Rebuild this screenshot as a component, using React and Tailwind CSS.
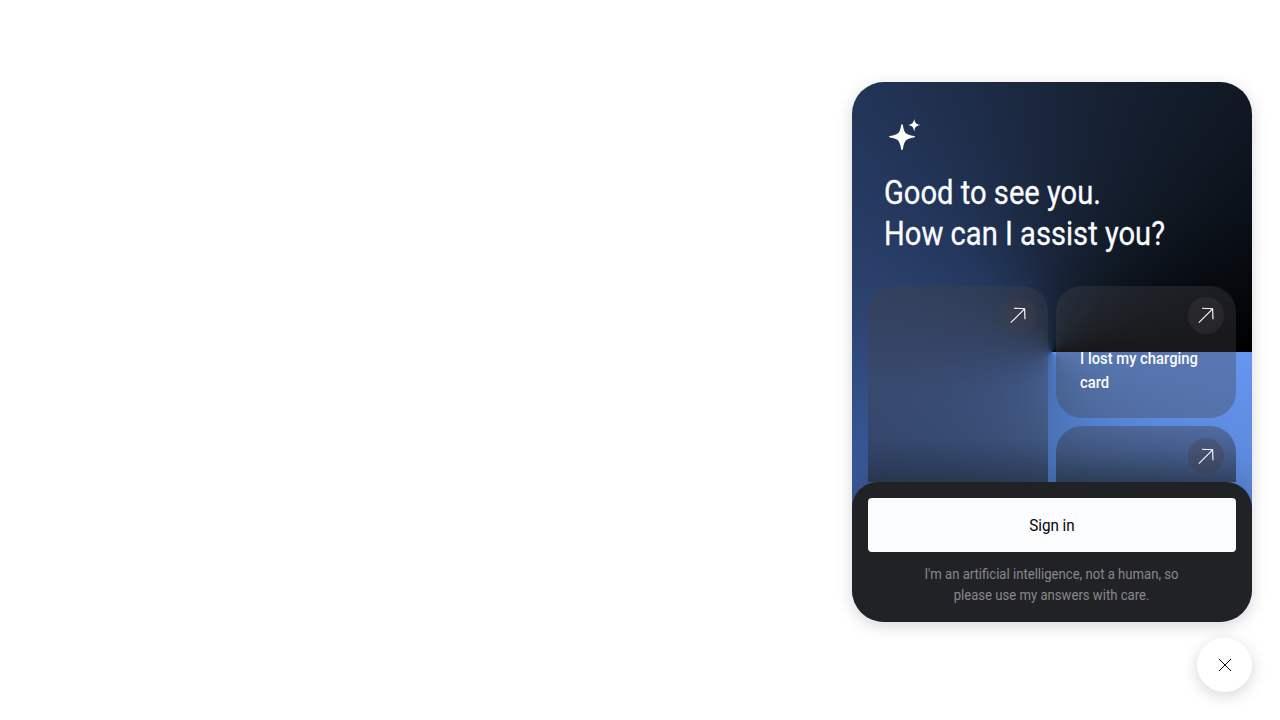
import React from "react";

const Arrow = () => (
  <span className="flex h-[36.5px] w-[36.5px] items-center justify-center rounded-full bg-[rgba(66,62,68,0.35)]">
    <svg width="18" height="18" viewBox="0 0 18 18" fill="none" stroke="#fbfcff" strokeWidth="1.15">
      <path d="M1.8 16.7L15.6 2.9M5 2.2L15.6 2.7L16 13.3" />
    </svg>
  </span>
);

const Card = ({ className = "", children }) => (
  <div
    className={`flex flex-col rounded-[26px] bg-[rgba(66,66,72,0.365)] p-3 pt-[11.5px] ${className}`}
  >
    <div className="flex justify-end">
      <Arrow />
    </div>
    {children}
  </div>
);

export default function App() {
  return (
    <div className="flex h-screen flex-col items-end overflow-hidden bg-white pr-7 pt-[82px] font-['Roboto',sans-serif]">
      <div className="flex h-[540px] w-[400px] flex-col overflow-hidden rounded-[32px] bg-[conic-gradient(from_90deg,#6696f0_0deg,#5a86d8_40deg,#4a73b8_90deg,#375795_150deg,#2d4472_190deg,#23365a_230deg,#19253a_270deg,#0f1722_310deg,#000_360deg)] shadow-[0_4px_16px_rgba(0,0,0,0.16)]">
        <div className="flex h-[400px] shrink-0 flex-col overflow-hidden">
          <header className="h-[203.5px] shrink-0 px-8 pt-8">
            <svg className="ml-[5px] mt-[5px]" width="32" height="32" viewBox="0 0 32 32" fill="#fff">
              <path d="M13 5Q13.6 5 14 7C15.4 14.200 16.600 15.600 25 17Q27.300 17.700 25 18.400C16.600 20 15.400 21.300 14 29.500Q13.600 31.200 13 31.200Q12.400 31.200 12 29.500C10.600 21.300 9.400 20 1 18.400Q-1 17.700 1 17C9.400 15.600 10.600 14.200 12 7Q12.400 5 13 5Z" />
              <path d="M25.200 0C26.200 4.300 26.900 5 31.500 6C26.900 7 26.200 7.800 25.200 12.400C24.200 7.800 23.500 7 18.900 6C23.500 5 24.200 4.300 25.200 0Z" />
            </svg>
            <h1 className="mt-[21px] w-max origin-left scale-x-[0.883] text-[33px] leading-[41px] text-[#fbfcff] [-webkit-text-stroke:0.3px_#fbfcff]">
              Good to see you.
              <br />
              How can I assist you?
            </h1>
          </header>
          <div className="flex gap-2 px-4">
            <Card className="h-[273px] w-[180px] bg-linear-to-b from-transparent from-38% via-[rgba(24,32,46,0.14)] via-56% to-[rgba(24,32,46,0.5)] to-73%" />
            <div className="flex w-[180px] flex-col gap-2">
              <Card className="h-[132.500px]">
                <p className="mt-[13px] w-max origin-left scale-x-[0.925] pl-[13px] text-[16px] font-medium leading-6 text-[#fbfcff]">
                  I lost my charging
                  <br />
                  card
                </p>
              </Card>
              <Card className="h-[132px] bg-linear-to-b from-[rgba(24,32,46,0.06)] from-0% via-[rgba(24,32,46,0.22)] via-20% to-[rgba(24,32,46,0.5)] to-43%" />
            </div>
          </div>
        </div>
        <footer className="flex flex-1 flex-col items-center rounded-t-[26px] bg-[#212225] px-4 pt-[15.5px] shadow-[0_-4px_32px_rgba(33,34,37,0.25)]">
          <button className="flex h-[54px] w-full items-center justify-center rounded-[4px] bg-[#fbfcff] pt-[2px] text-[16px] text-[#010205]">
            <span className="scale-x-[0.95]">Sign in</span>
          </button>
          <p className="mt-[12.5px] w-max scale-x-[0.937] text-center text-[14px] leading-[21px] text-[#88898c]">
            I'm an artificial intelligence, not a human, so
            <br />
            please use my answers with care.
          </p>
        </footer>
      </div>
      <button className="mt-4 flex h-[54px] w-[55px] items-center justify-center rounded-full bg-white shadow-[0_4px_16px_rgba(0,0,0,0.16)]">
        <svg width="14" height="14" viewBox="0 0 14 14" stroke="#010205" strokeWidth="1" fill="none">
          <path d="M1 1L13 13M13 1L1 13" />
        </svg>
      </button>
    </div>
  );
}
